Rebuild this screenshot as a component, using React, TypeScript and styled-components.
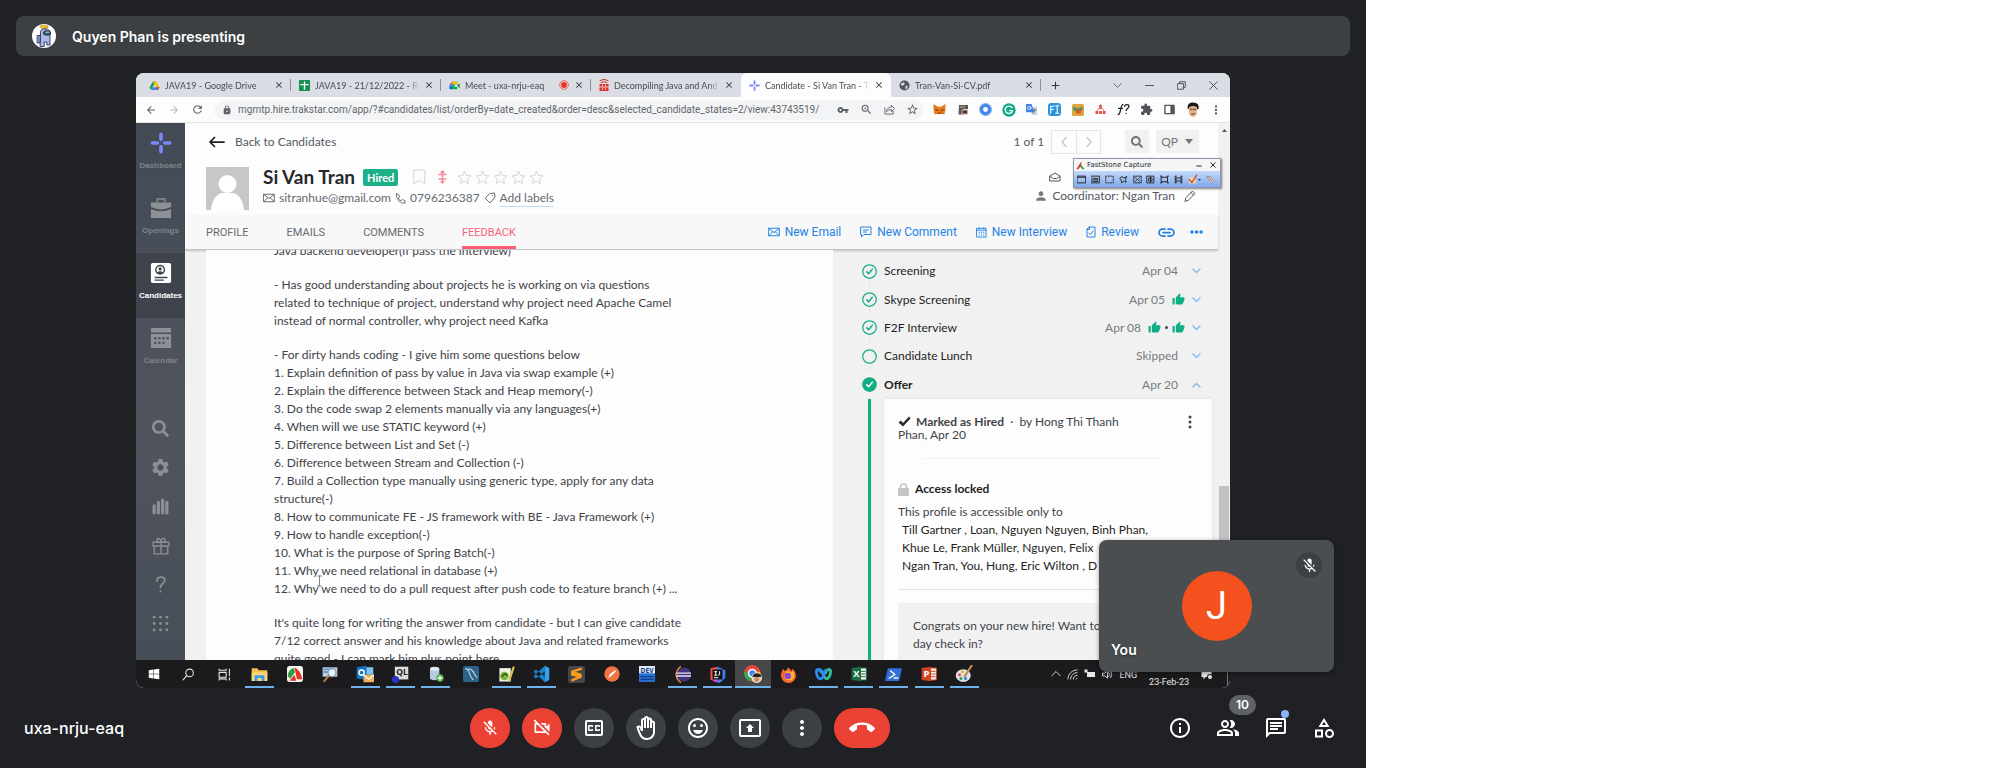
import React from "react";
import styled, { createGlobalStyle, css } from "styled-components";
import {
  MdMicOff, MdOutlineVideocamOff, MdOutlineClosedCaption, MdOutlineBackHand, MdOutlineEmojiEmotions,
  MdOutlinePresentToAll, MdMoreVert, MdCallEnd, MdOutlineInfo, MdOutlinePeopleAlt, MdOutlineChat,
  MdOutlineCategory, MdArrowBack, MdArrowForward, MdRefresh, MdLock, MdVpnKey, MdZoomIn, MdStarBorder,
  MdExtension, MdClose, MdAdd, MdPerson, MdThumbUp, MdSettings,
} from "react-icons/md";
import { FaWindows, FaSearch } from "react-icons/fa";

const Global = createGlobalStyle`
  *, *::before, *::after { box-sizing: border-box; }
  body { margin: 0; background: #fff; }
  button { font: inherit; color: inherit; background: none; border: 0; padding: 0; margin: 0; cursor: pointer; }
  a { color: inherit; text-decoration: none; }
  svg { display: block; flex: none; }
  h1, h2, p, ul, ol { margin: 0; padding: 0; }
  ul, ol { list-style: none; }
`;

const meetFont = `Inter, "Open Sans", sans-serif`;
const appFont = `Lato, "Open Sans", sans-serif`;
const navFont = `Roboto, Lato, sans-serif`;
const systemFont = `Roboto, "Noto Sans", sans-serif`;

/* ---------- meeting frame ---------- */
const Page = styled.div`
  display: grid;
  grid-template-columns: 1366fr 630fr;
  min-height: 100vh;
`;
const Meeting = styled.main`
  position: relative;
  display: flex;
  flex-direction: column;
  min-width: 0;
  height: 100vh;
  min-height: 640px;
  background: #202124;
  color: #fff;
  font-family: ${meetFont};
  overflow: hidden;
`;
const PresenterBar = styled.header`
  display: flex;
  align-items: center;
  gap: 16px;
  flex: none;
  height: 40px;
  margin: 16px 16px 17px;
  padding: 0 16px;
  border-radius: 8px;
  background: #3c4043;
  font-size: 14px;
  font-weight: 600;
`;
const Stage = styled.section`
  display: flex;
  flex: 1;
  min-height: 0;
  padding: 0 136px;
`;
const Screen = styled.div`
  display: flex;
  flex-direction: column;
  flex: 1;
  min-width: 0;
  border-radius: 8px;
  overflow: hidden;
  background: #fff;
`;
const SelfTile = styled.aside`
  position: absolute;
  right: 32px;
  bottom: 96px;
  display: grid;
  place-items: center;
  width: 235px;
  height: 132px;
  border-radius: 8px;
  background: #4a4e51;
  box-shadow: 0 1px 4px rgba(0, 0, 0, 0.4);
`;
const SelfInitial = styled.div`
  display: grid;
  place-items: center;
  width: 70px;
  height: 70px;
  border-radius: 50%;
  background: #f4511e;
  font: 400 38px/1 Roboto, sans-serif;
`;
const SelfMuted = styled.span`
  position: absolute;
  top: 12px;
  right: 12px;
  display: grid;
  place-items: center;
  width: 26px;
  height: 26px;
  border-radius: 50%;
  background: #3c4043;
`;
const SelfName = styled.span`
  position: absolute;
  left: 12px;
  bottom: 12px;
  font-size: 14px;
  font-weight: 600;
  line-height: 20px;
  text-shadow: 0 1px 2px rgba(0, 0, 0, 0.5);
`;
const ControlBar = styled.footer`
  display: grid;
  grid-template-columns: 1fr auto 1fr;
  align-items: center;
  flex: none;
  height: 80px;
  padding: 0 30px 0 24px;
`;
const MeetingCode = styled.span`
  font-size: 16px;
  font-weight: 500;
`;
const Controls = styled.div`
  display: flex;
  gap: 12px;
`;
const RoundButton = styled.button<{ $tone?: "red" | "grey"; $wide?: boolean }>`
  display: grid;
  place-items: center;
  width: ${(p) => (p.$wide ? 56 : 40)}px;
  height: 40px;
  border-radius: 20px;
  background: ${(p) => (p.$tone === "red" ? "#ea4335" : "#3c4043")};
`;
const SideControls = styled.div`
  display: flex;
  justify-content: flex-end;
  gap: 24px;
`;
const SideButton = styled.button`
  position: relative;
`;
const CountBadge = styled.span`
  position: absolute;
  left: 13px;
  bottom: 25px;
  width: 27px;
  border-radius: 10px;
  background: #5f6368;
  font-size: 12px;
  font-weight: 600;
  line-height: 20px;
`;
const NewDot = styled.span`
  position: absolute;
  top: -6px;
  right: -1px;
  width: 8px;
  height: 8px;
  border-radius: 50%;
  background: #8ab4f8;
`;

/* ---------- browser chrome ---------- */
const TabStrip = styled.div`
  display: flex;
  flex: none;
  height: 24px;
  padding-left: 5px;
  background: #dadde3;
  color: #484c52;
  font: 9px/23px ${appFont};
`;
const BrowserTab = styled.button<{ $active?: boolean; $divider?: boolean }>`
  display: flex;
  align-items: center;
  gap: 5px;
  flex: 0 1 150px;
  min-width: 0;
  height: 24px;
  padding: 0 7px 0 8px;
  text-align: left;
  border-radius: 6px 6px 0 0;
  ${(p) => p.$active && css`background: #fdfdfe;`}
  ${(p) => p.$divider && css`background: linear-gradient(#8c9096, #8c9096) right center / 1px 12px no-repeat;`}
`;
const TabTitle = styled.span`
  flex: 1;
  min-width: 0;
  overflow: hidden;
  white-space: nowrap;
  mask-image: linear-gradient(to right, #000 90%, transparent);
`;
const NewTab = styled.button`
  padding: 0 8px;
`;
const WindowButtons = styled.div`
  display: flex;
  align-items: center;
  gap: 23px;
  margin-left: auto;
  padding-right: 12px;
`;
const AddressRow = styled.div`
  display: flex;
  align-items: center;
  flex: none;
  height: 26px;
  padding: 0 3px 0 9px;
  border-bottom: 1px solid #e2e3e5;
  background: #fdfdfe;
  color: #5f6368;
`;
const HistoryButtons = styled.div`
  display: flex;
  gap: 11px;
  margin-right: 10px;
`;
const AddressField = styled.label`
  display: flex;
  align-items: center;
  gap: 6px;
  flex: 1;
  min-width: 0;
  height: 20px;
  margin-right: 5px;
  padding: 0 4px 0 8px;
  border-radius: 10px;
  background: #f3f4f5;
`;
const AddressInput = styled.input`
  flex: 1;
  min-width: 0;
  padding: 0;
  border: 0;
  outline: 0;
  background: none;
  color: #62666b;
  font: 10px/16px ${systemFont};
`;
const FieldIcons = styled.span`
  display: flex;
  align-items: center;
  gap: 11px;
`;
const Extensions = styled.div`
  display: grid;
  grid-template-columns: repeat(13, 23px);
  place-items: center;
`;

/* ---------- recruiting app ---------- */
const AppBody = styled.div`
  display: flex;
  flex: 1;
  min-height: 0;
  color: #3f4347;
  font: 12px/18px ${appFont};
`;
const Sidebar = styled.nav`
  display: flex;
  flex-direction: column;
  flex: 0 0 49px;
  background: linear-gradient(#434a56, #50545d 55%, #474e58);
  color: #8c9095;
`;
const SideLink = styled.a<{ $active?: boolean }>`
  display: flex;
  flex-direction: column;
  align-items: center;
  gap: 7px;
  height: 65px;
  padding-top: 9px;
  font: 700 8px/10px "Liberation Sans", sans-serif;
  color: ${(p) => (p.$active ? "#fff" : "#7f848a")};
  ${(p) => p.$active && css`background: #3e434c;`}
`;
const SideTools = styled.div`
  display: flex;
  flex-direction: column;
  padding-top: 26px;
`;
const SideTool = styled.button`
  display: grid;
  place-items: center;
  height: 39px;
`;
const Workspace = styled.div`
  display: flex;
  flex-direction: column;
  flex: 1;
  min-width: 0;
  background: #f1f1f2;
`;
const ProfileHead = styled.header`
  display: flex;
  flex-direction: column;
  flex: none;
  height: 92px;
  padding: 6px 0 0 21px;
  background: #fdfdfe;
`;
const HeadRow = styled.div`
  display: flex;
  align-items: center;
  height: 25px;
  color: #55595e;
  padding-right: 19px;
`;
const BackLink = styled.a`
  display: flex;
  align-items: center;
  gap: 10px;
  margin-right: auto;
  padding-left: 3px;
`;
const Pager = styled.div`
  display: flex;
  margin: 0 24px 0 7px;
  border: 1px solid #e6e6e8;
`;
const PagerButton = styled.button`
  display: grid;
  place-items: center;
  width: 24px;
  height: 22px;
  color: #c8cacd;
  & + & { border-left: 1px solid #e6e6e8; }
`;
const GreyButton = styled.button`
  display: flex;
  align-items: center;
  justify-content: center;
  gap: 7px;
  min-width: 24px;
  height: 23px;
  margin-right: 7px;
  padding: 0 6px 0 5px;
  background: #f1f1f2;
  color: #6f757b;
  &:last-child { margin-right: 0; }
`;
const PersonRow = styled.div`
  display: flex;
  gap: 14px;
  margin-top: 13px;
  padding-right: 22px;
`;
const PersonText = styled.div`
  display: flex;
  flex-direction: column;
  flex: 1;
`;
const NameLine = styled.div`
  display: flex;
  align-items: center;
  height: 20px;
  color: #d0d2d4;
`;
const Name = styled.h1`
  margin-right: 8px;
  color: #26282b;
  font-size: 19px;
  line-height: 20px;
`;
const HiredTag = styled.span`
  margin-right: 15px;
  padding: 0 4px;
  border-radius: 2px;
  background: #1bb088;
  color: #fff;
  font-size: 11px;
  font-weight: 700;
  line-height: 17px;
`;
const PriorityMark = styled.span`
  margin: 0 10px 0 12px;
`;
const Stars = styled.span`
  display: flex;
  gap: 3px;
`;
const ContactLine = styled.div`
  display: flex;
  align-items: center;
  gap: 4px;
  height: 22px;
  color: #666a6f;
  white-space: nowrap;
`;
const LabelButton = styled.button`
  border-bottom: 1px solid #bcdcf5;
  line-height: 16px;
`;
const Coordinator = styled.div`
  display: flex;
  flex-direction: column;
  color: #55595e;
`;
const CoordinatorLine = styled.div`
  display: flex;
  align-items: center;
  gap: 4px;
  height: 19px;
  padding-left: 15px;
  &:last-child { padding-left: 0; }
`;
const EditButton = styled.button`
  padding-left: 5px;
`;
const ProfileNav = styled.nav`
  position: relative;
  display: flex;
  align-items: stretch;
  flex: none;
  height: 35px;
  padding: 0 15px 0 21px;
  border-bottom: 1px solid #c4c5c7;
  background: #f8f8f9;
  box-shadow: 0 1px 2px rgba(0, 0, 0, 0.2);
  font-family: ${navFont};
  line-height: 36px;
  white-space: nowrap;
`;
const NavTabs = styled.div`
  display: flex;
  gap: 38px;
  margin-right: auto;
  color: #666a6f;
  font-size: 11px;
`;
const NavTab = styled.a<{ $active?: boolean }>`
  ${(p) => p.$active && css`
    color: #f7637a;
    box-shadow: inset 0 -3px #fb5f72;
  `}
`;
const NavActions = styled.div`
  display: flex;
  gap: 19px;
  color: #2482e4;
`;
const NavAction = styled.button`
  display: flex;
  align-items: center;
  gap: 5px;
  &:last-child { margin-left: -4px; }
`;
const Columns = styled.div`
  display: flex;
  flex: 1;
  min-height: 0;
  overflow: hidden;
`;
const Feedback = styled.article`
  position: relative;
  flex: 0 1 627px;
  height: 100%;
  margin-left: 21px;
  padding-left: 68px;
  background: #fdfdfe;
  overflow: hidden;
  white-space: nowrap;
`;
const Notes = styled.div`
  display: flex;
  flex-direction: column;
  gap: 16px;
  margin-top: -8px;
`;
const Caret = styled.span`
  position: absolute;
  left: 110px;
  top: 325px;
  color: #777;
`;
const Progress = styled.section`
  display: flex;
  flex-direction: column;
  flex: 1;
  min-width: 0;
  padding: 7px 6px 0 29px;
`;
const StageList = styled.ol`
  display: grid;
  grid-template-rows: repeat(5, 1fr);
  flex: none;
  height: 142px;
  color: #1d1f21;
`;
const StageItem = styled.li<{ $bold?: boolean; $last?: boolean }>`
  display: flex;
  align-items: center;
  gap: 7px;
  font-weight: ${(p) => (p.$bold ? 700 : 400)};
  background: ${(p) => (p.$last ? "none" : "linear-gradient(#d3e8e3, #d3e8e3) 7px 24px / 1px 100% no-repeat")};
`;
const StageMeta = styled.span`
  display: flex;
  align-items: center;
  gap: 7px;
  margin-left: auto;
  padding-right: 11px;
  color: #777b80;
  font-weight: 400;
`;
const Thumbs = styled.span`
  display: flex;
  align-items: center;
  gap: 4px;
  color: #0fae85;
`;
const Dot = styled.i`
  width: 3px;
  height: 3px;
  border-radius: 50%;
  background: #444;
`;
const StageDetail = styled.div`
  display: flex;
  flex: 1;
  min-height: 0;
  margin-left: 6px;
  border-left: 3px solid #0fae85;
  padding-left: 13px;
`;
const Card = styled.div`
  flex: 1;
  min-width: 0;
  overflow: hidden;
  padding: 16px 14px 0;
  background: #fdfdfe;
  box-shadow: 0 0 3px rgba(0, 0, 0, 0.08);
  white-space: nowrap;
`;
const Marked = styled.div`
  display: flex;
  justify-content: space-between;
  align-items: flex-start;
  line-height: 13px;
  padding-right: 6px;
  p svg { display: inline-block; margin-right: 5px; vertical-align: -1px; }
`;
const Rule = styled.hr<{ $faint?: boolean }>`
  margin: ${(p) => (p.$faint ? "17px 38px 21px 24px" : "14px 0 13px")};
  border: 0;
  border-top: 1px solid ${(p) => (p.$faint ? "#f3f3f4" : "#e3e3e5")};
`;
const LockedTitle = styled.h2`
  display: flex;
  align-items: center;
  gap: 6px;
  margin-bottom: 5px;
  color: #1d1f21;
  font-size: 12px;
  line-height: 18px;
`;
const Members = styled.p`
  padding-left: 4px;
  color: #1d1f21;
`;
const HireNote = styled.div`
  padding: 14px 15px;
  background: #f1f1f2;
  height: 80px;
`;
const ScrollTrack = styled.div`
  display: flex;
  flex-direction: column;
  align-items: center;
  flex: 0 0 12px;
  padding-top: 6px;
  background: #f1f1f2;
  color: #55595e;
`;
const ScrollThumb = styled.div`
  flex: 1;
  width: 10px;
  margin-top: 354px;
  background: #c1c1c3;
`;
const CaptureWindow = styled.div`
  position: absolute;
  top: 158px;
  right: 145px;
  width: 148px;
  height: 30px;
  border: 1px solid #8b97a8;
  background: #f4f5f7;
  box-shadow: 1px 1px 2px rgba(0, 0, 0, 0.5);
  color: #2a2a2a;
`;
const CaptureTitle = styled.div`
  display: flex;
  align-items: center;
  gap: 2px;
  height: 12px;
  padding: 0 4px 0 2px;
  font: 7px/12px "DejaVu Sans", sans-serif;
  white-space: nowrap;
`;
const CaptureCaption = styled.span`
  flex: 1;
`;
const CaptureTools = styled.div`
  display: flex;
  align-items: center;
  justify-content: space-between;
  height: 16px;
  padding: 0 5px 0 3px;
  background: linear-gradient(#c5daf8, #7fa9ee);
`;

/* ---------- desktop taskbar ---------- */
const Taskbar = styled.div`
  display: flex;
  flex: none;
  height: 28px;
  background: #1b1b1d;
  color: #e8e8e8;
  font: 9px/12px ${systemFont};
`;
const TaskIcons = styled.div`
  display: grid;
  grid-template-columns: repeat(24, 1fr);
  flex: 0 1 846px;
`;
const TaskButton = styled.button<{ $open?: boolean; $front?: boolean }>`
  display: grid;
  place-items: center;
  ${(p) => p.$front && css`background-color: #47474a;`}
  ${(p) => p.$open && css`
    background-image: linear-gradient(#6fb2ea, #6fb2ea);
    background-position: center bottom;
    background-size: ${p.$front ? "100%" : "29px"} 2px;
    background-repeat: no-repeat;
  `}
`;
const Tray = styled.div`
  display: flex;
  gap: 6px;
  margin-left: auto;
  padding: 9px 2px 0 0;
`;
const TrayDate = styled.span`
  padding: 7px 6px 0 6px;
`;
const TrayEdge = styled.span`
  width: 1px;
  margin-left: 8px;
  background: #77777a;
`;

/* ---------- drawings ---------- */
type GlyphProps = { w?: number; h?: number; box?: string; children: React.ReactNode; line?: number };
const Glyph = ({ w = 12, h = w, box = "0 0 24 24", children, line }: GlyphProps) => (
  <svg width={w} height={h} viewBox={box} aria-hidden="true"
    fill={line ? "none" : "currentColor"} stroke={line ? "currentColor" : "none"}
    strokeWidth={line} strokeLinecap="round" strokeLinejoin="round">{children}</svg>
);

const Crewmate = () => (
  <Glyph w={24}>
    <circle cx="12" cy="12" r="12" fill="#fff" />
    <ellipse cx="12" cy="2.8" rx="4.2" ry="1.5" fill="#f4c92c" stroke="#b58a14" strokeWidth=".7" />
    <path d="M5.5 11.5h3V19h-3z" fill="#7f93c9" stroke="#1f2540" strokeWidth=".8" />
    <path d="M8.5 8.5C8.5 5.8 10 4.8 13 4.8s5 1.400 5 3.700V21h-3.200v-3h-2.600v4.500H8.500z" fill="#a9b8e4" stroke="#2a3158" strokeWidth=".9" />
    <rect x="11.500" y="7" width="7" height="4" rx="2" fill="#2e5f66" stroke="#10222a" strokeWidth=".9" />
    <path d="M14 8.200h3" stroke="#b9e6ea" strokeWidth="1" />
  </Glyph>
);
const Drive = () => (
  <Glyph w={11}>
    <path d="M8.500 3h7L12 9z" fill="#188038" /><path d="M8.500 3 1 16l3.500 6L12 9z" fill="#1e9e54" />
    <path d="M15.500 3 23 16h-7L8.500 3z" fill="#fbbc04" /><path d="M8 16h15l-3.500 6h-15z" fill="#4285f4" /><path d="M16 16h7l-3.500 6z" fill="#ea4335" />
  </Glyph>
);
const Sheet = () => (
  <Glyph w={11}><rect width="24" height="24" rx="2" fill="#14904f" /><path d="M12 4v16M4 10h16" stroke="#fff" strokeWidth="3" /></Glyph>
);
const MeetLogo = () => (
  <Glyph w={11}>
    <path d="M7 4h11v5h-6v6h6v5H7z" fill="#00ac47" /><path d="M1 10l6-6v6z" fill="#ea4335" /><path d="M1 10h6v5H1z" fill="#2684fc" />
    <path d="M1 15h6v5H3a2 2 0 0 1-2-2z" fill="#0066da" /><path d="M7 4h9a2 2 0 0 1 2 2v3H7z" fill="#ffba00" /><path d="M18 12l5-5v11z" fill="#00832d" />
  </Glyph>
);
const Javap = () => (
  <Glyph w={10} h={12} box="0 0 20 24"><path d="M2 3q8-5 16 0M4 7q6-4 12 0" stroke="#d8332d" strokeWidth="2" fill="none" /><rect x="1" y="10" width="18" height="14" rx="1" fill="#d8332d" /><path d="M1 16h18M7 12v2M13 12v2M7 19v2M13 19v2" stroke="#fff" strokeWidth="1.500" /></Glyph>
);
const Spark = ({ size = 11 }: { size?: number }) => (
  <Glyph w={size}><path d="M12 2.500V8M12 16v5.500M2.500 12H8M16 12h5.500" stroke="#7b86f8" strokeWidth="4" strokeLinecap="round" /></Glyph>
);
const Globe = () => (
  <Glyph w={11}><circle cx="12" cy="12" r="11" fill="#50555b" /><path d="M4 8l6-3 3 3-4 4H5zM14 13l5-1-1 6-4 2z" fill="#dadde3" /></Glyph>
);
const Recording = () => (
  <Glyph w={10}><circle cx="12" cy="12" r="10.500" fill="none" stroke="#ef5545" strokeWidth="2" /><circle cx="12" cy="12" r="7" fill="#e5382b" /></Glyph>
);
const Envelope = ({ w = 12 }: { w?: number }) => (
  <Glyph w={w} h={10} box="0 0 24 20" line={2}><path d="M1.500 2.500h21v15h-21zM1.500 3l10.500 8 10.500-8M2 17l7-7M22 17l-7-7" /></Glyph>
);
const Chevron = ({ up }: { up?: boolean }) => (
  <Glyph w={9} h={6} box="0 0 18 12" line={3}><path d={up ? "M2 10l7-7 7 7" : "M2 2l7 7 7-7"} stroke="#85bdec" /></Glyph>
);
const StageMark = ({ state }: { state: "done" | "open" | "now" }) => (
  <Glyph w={15} line={2}>
    <circle cx="12" cy="12" r="10.800" stroke="#19ad87" fill={state === "now" ? "#0fae85" : "#f1f1f2"} />
    {state !== "open" && <path d="M7.500 12.500l3 3 6-7" stroke={state === "now" ? "#fff" : "#19ad87"} strokeWidth="2.500" />}
  </Glyph>
);
const star = "M12 2l3 6.800 7.200.7-5.400 4.900 1.600 7.100L12 17.700l-6.400 3.800 1.600-7.100L1.800 9.500 9 8.800z";

const extensionIcons = [
  <Glyph w={13}><path d="M1 2l8 5h6l8-5v10l-2 9-6-1h-6l-6 1-2-9z" fill="#e8791e" /><path d="M5 12l4 2M19 12l-4 2M9 19h6" stroke="#7b3d12" strokeWidth="2" /></Glyph>,
  <Glyph w={12}><path d="M4 2h18v8H12v11H3z" fill="#55585c" /><path d="M6 6h10M11 12h10v8H11z" stroke="#d9a58e" strokeWidth="2" fill="#3b3d40" /></Glyph>,
  <Glyph w={13}><circle cx="12" cy="12" r="11" fill="#4387e8" /><circle cx="12" cy="12" r="4.500" fill="#fff" /><circle cx="12" cy="12" r="11" fill="none" stroke="#7eb0f5" strokeWidth="2" /></Glyph>,
  <Glyph w={14}><circle cx="12" cy="12" r="11.500" fill="#14a88a" /><path d="M17 8a6.300 6.300 0 1 0 1 5h-5" stroke="#fff" strokeWidth="2.400" fill="none" /></Glyph>,
  <Glyph w={13}><path d="M9 7h13v15H13z" fill="#c9d2dd" /><path d="M2 2h10l5 15H2z" fill="#3f7fe8" /><circle cx="8" cy="9" r="3" stroke="#fff" strokeWidth="1.500" fill="none" /><path d="M15 13h6M18 11q0 6-3 8" stroke="#5f6b7a" strokeWidth="1.500" fill="none" /></Glyph>,
  <Glyph w={13}><rect width="24" height="24" rx="6" fill="#2a93dc" /><path d="M5 19V6h6M5 12h5M14 5h6M17 5v14M14 19h6" stroke="#fff" strokeWidth="2" fill="none" /></Glyph>,
  <Glyph w={12}><rect width="24" height="24" rx="3" fill="#e0a63c" /><path d="M3 5l9 4 9-4v8l-9 3-9-3z" fill="#3f9b76" /><path d="M8 10h10v9H8z" fill="#cf5b34" /></Glyph>,
  <Glyph w={11}><path d="M12 2v8M5 14l3-4h8l3 4" stroke="#e05343" strokeWidth="2" fill="none" /><path d="M9 2h6v6H9zM1 15h6v7H1zM9 15h6v7H9zM17 15h6v7h-6z" fill="#e05343" /></Glyph>,
  <Glyph w={13} line={2.4}><path d="M2 21c5 2 4-18 9-18M3 10h7M14 6c1-4 8-4 8 0 0 4-5 4-5 8M16.500 19v.3" stroke="#222" /></Glyph>,
  <MdExtension size={13} color="#505459" />,
  <Glyph w={11}><path d="M2 3h20v18H2z" fill="none" stroke="#505459" strokeWidth="3" /><path d="M14 3h8v18h-8z" fill="#505459" /></Glyph>,
  <Glyph w={16}><path d="M4 10C3 3 8 0 13 1c6 0 9 4 7 10z" fill="#1c1716" /><path d="M6 8q6-4 12 0v8q-1 6-6 6t-6-6z" fill="#e3ae88" /><path d="M8 11h3M13 11h3M10 18h4" stroke="#2b1a12" strokeWidth="1.200" /></Glyph>,
  <MdMoreVert size={14} />,
];

const Letter = ({ bg, children }: { bg: string; children: string }) => (
  <Glyph w={16}><path d="M12 3h11v18H12z" fill="#f2f2f2" stroke={bg} strokeWidth="1.500" /><path d="M15 8h6M15 12h6M15 16h6" stroke={bg} strokeWidth="1.500" /><path d="M1 3l14-2v22L1 21z" fill={bg} /><text x="8" y="17" fontSize="14" fontWeight="700" fill="#fff" textAnchor="middle" fontFamily="Open Sans">{children}</text></Glyph>
);
type Task = { name: string; icon: React.ReactNode; open?: boolean; front?: boolean };
const tasks: Task[] = [
  { name: "Start", icon: <FaWindows size={12} color="#fff" /> },
  { name: "Search", icon: <Glyph w={13} line={2}><circle cx="14" cy="9" r="7" /><path d="M9 14l-7 8" /></Glyph> },
  { name: "Task view", icon: <Glyph w={13} line={2}><path d="M2 8h13v9H2zM2 2v2h13V2M2 22v-2h13v2M21 2v12M21 18v4" /></Glyph> },
  { name: "File Explorer", open: true, icon: <Glyph w={17}><path d="M1 3h8l2 3h12v15H1z" fill="#f3c24b" /><path d="M1 9h22v12H1z" fill="#fbd977" /><path d="M5 13h14v8h-4v-4H9v4H5z" fill="#3f9be8" /></Glyph> },
  { name: "FastStone Capture", icon: <Glyph w={16}><rect width="24" height="24" rx="4" fill="#f4f4f0" /><path d="M1 15Q2 5 10 3l2 6-7 10z" fill="#2f9b45" /><path d="M11 2q9 4 12 18h-8z" fill="#e33528" /><path d="M4 22l7-9 3 9z" fill="#e33528" /></Glyph> },
  { name: "Everything", icon: <Glyph w={16}><rect x="1" y="2" width="22" height="14" fill="#b8d4ea" /><path d="M3 5h12M3 9h8" stroke="#4d88bd" strokeWidth="2" /><circle cx="15" cy="10" r="6" fill="#e4f2fb" stroke="#8798a8" strokeWidth="2" /><path d="M10 15l-7 8" stroke="#b57b4a" strokeWidth="3" /></Glyph> },
  { name: "Outlook", open: true, icon: <Glyph w={18}><path d="M13 3h10v10H13z" fill="#7cc4f4" /><path d="M1 3l13-2v19L1 18z" fill="#1472c4" /><circle cx="7.500" cy="10" r="3.500" fill="none" stroke="#fff" strokeWidth="2" /><path d="M10 13h14v10H10z" fill="#f0b35a" /><path d="M10 13l7 6 7-6" stroke="#fff" strokeWidth="1.500" fill="none" /></Glyph> },
  { name: "SQL Developer", open: true, icon: <Glyph w={17}><path d="M4 1h19v18H4z" fill="#dcdcda" /><text x="14" y="12" fontSize="12" fontWeight="700" fill="#1b1b1d" textAnchor="middle" fontFamily="Open Sans">QL</text><circle cx="5" cy="19" r="5" fill="#2a36c8" /></Glyph> },
  { name: "Database", open: true, icon: <Glyph w={16}><path d="M3 4v15q7 5 14 0V4z" fill="#b9cbe0" /><ellipse cx="10" cy="4" rx="7" ry="3" fill="#dfe9f4" /><circle cx="18" cy="18" r="5.500" fill="#4bae3f" /><path d="M18 15v6M15 18h6" stroke="#fff" strokeWidth="2" /></Glyph> },
  { name: "MySQL Workbench", icon: <Glyph w={16}><rect width="24" height="24" rx="3" fill="#2b6488" /><path d="M4 4c6 0 6 14 11 16M8 5c8-2 8 9 13 12" stroke="#b8d6e6" strokeWidth="1.800" fill="none" /></Glyph> },
  { name: "Notepad++", open: true, icon: <Glyph w={17}><path d="M2 3h16v19H2z" fill="#eef3e4" /><circle cx="9" cy="14" r="6" fill="#79b843" /><path d="M6 15q3-6 7-2" stroke="#2f4d19" strokeWidth="2" fill="none" /><path d="M22 2l-6 18" stroke="#e2c04b" strokeWidth="3" /></Glyph> },
  { name: "VS Code", open: true, icon: <Glyph w={18}><path d="M17 1l6 3v16l-6 3z" fill="#36a5ee" /><path d="M17 1L2 15l3 3L18 8zM17 23L2 9l3-3 13 10z" fill="#1a80c9" /></Glyph> },
  { name: "Sublime Text", icon: <Glyph w={17}><rect width="24" height="24" rx="3" fill="#47474a" /><path d="M18 4L6 8v4l12 3-12 5M6 8.500l12 4" stroke="#f79a1f" strokeWidth="3.500" fill="none" /></Glyph> },
  { name: "Postman", icon: <Glyph w={16}><circle cx="12" cy="12" r="11.500" fill="#f37440" /><path d="M6 18l3-6 8-6 1 2-7 7z" fill="#fff" /></Glyph> },
  { name: "Dev tools", icon: <Glyph w={16}><path d="M0 0h24v24H0z" fill="#246fd0" /><path d="M0 0h24v11H0z" fill="#dce9fa" /><text x="12" y="10" fontSize="10" fontWeight="700" fill="#173e79" textAnchor="middle" fontFamily="Open Sans">DEV</text><path d="M3 16h8M13 16h8M3 20h18" stroke="#123f86" strokeWidth="2" /></Glyph> },
  { name: "Eclipse", open: true, icon: <Glyph w={17}><path d="M9 1Q-3 12 9 23" stroke="#f0943a" strokeWidth="2" fill="none" /><circle cx="14" cy="12" r="10" fill="#42377c" /><path d="M4 10h20M4 14h20" stroke="#e6e3f4" strokeWidth="2" /></Glyph> },
  { name: "IntelliJ IDEA", open: true, icon: <Glyph w={17}><path d="M2 3l10-2-3 21-7-3z" fill="#f4513f" /><path d="M12 1l11 5v11l-8 7-8-2z" fill="#3b7ff0" /><path d="M8 23l-4-5 12 2z" fill="#c94bd8" /><path d="M5 5h14v14H5z" fill="#111" /><path d="M8 8h3M9.500 8v5M8 13h3M15 8v4q0 1-2 1M7.500 16.500h5" stroke="#fff" strokeWidth="1.400" fill="none" /></Glyph> },
  { name: "Chrome", open: true, front: true, icon: <Glyph w={18}><circle cx="11" cy="11" r="11" fill="#e8453c" /><path d="M1 7q-3 10 7 15l5-8-8-2z" fill="#34a853" /><path d="M11 22q11-1 11-13h-9l2 6z" fill="#fbc116" /><circle cx="11" cy="11" r="5" fill="#4285f4" stroke="#fff" strokeWidth="2" /><circle cx="17" cy="17" r="7" fill="#e9d9c8" /><path d="M11 16q2-6 7-5 5 1 5 5z" fill="#222" /><circle cx="17" cy="19" r="3.500" fill="#c98f68" /></Glyph> },
  { name: "Firefox", icon: <Glyph w={17}><path d="M2 9l2-5 3 3q3-1 4-5 4 2 5 5l2-3q6 6 4 13-3 7-10 7T2 17q-2-4 0-8z" fill="#f4652b" /><path d="M8 8q4-2 7 1l4-2q4 9-3 13-8 2-10-5z" fill="#fdb62c" /><circle cx="11" cy="14" r="4.500" fill="#8b45d6" /></Glyph> },
  { name: "Webex", open: true, icon: <Glyph w={17}><path d="M7 7c4-3 5 11 9 11s6-6 6-11c-1-4-6-2-7 3" stroke="#32c191" strokeWidth="4" fill="none" /><path d="M9 9C8 3 2 4 2 8c1 12 8 13 10 5q1-5 3-7" stroke="#2b8df2" strokeWidth="4" fill="none" /></Glyph> },
  { name: "Excel", open: true, icon: <Letter bg="#1d7044">X</Letter> },
  { name: "PowerShell", open: true, icon: <Glyph w={17}><path d="M4 3h20l-4 18H0z" fill="#2f6fd6" /><path d="M8 7l6 5-8 5M13 17h5" stroke="#fff" strokeWidth="2" fill="none" /></Glyph> },
  { name: "PowerPoint", open: true, icon: <Letter bg="#d24625">P</Letter> },
  { name: "Paint", open: true, icon: <Glyph w={18}><ellipse cx="11" cy="14" rx="10" ry="8.500" fill="#d8e3ea" /><circle cx="6" cy="13" r="2" fill="#e24b3a" /><circle cx="10" cy="9" r="2" fill="#f0b429" /><circle cx="8" cy="18" r="2" fill="#3a9b52" /><circle cx="14" cy="18" r="2" fill="#357fd0" /><path d="M22 1l-9 14" stroke="#c98746" strokeWidth="3" /></Glyph> },
];

const tabs = [
  { title: "JAVA19 - Google Drive", icon: <Drive />, divider: true },
  { title: "JAVA19 - 21/12/2022 - Rele", icon: <Sheet />, divider: true },
  { title: "Meet - uxa-nrju-eaq", icon: <MeetLogo />, divider: true, recording: true },
  { title: "Decompiling Java and And", icon: <Javap /> },
  { title: "Candidate - Si Van Tran - T", icon: <Spark />, active: true },
  { title: "Tran-Van-Si-CV.pdf", icon: <Globe />, divider: true },
];

const sideLinks = [
  { label: "Dashboard", icon: <Spark size={22} /> },
  { label: "Openings", icon: <Glyph w={22}><path d="M8 5V2h8v3" fill="none" stroke="currentColor" strokeWidth="2" /><path d="M1 6h22v5q-11 5-22 0zM1 13q11 5 22 0v10H1z" fill="#8c9196" /></Glyph> },
  { label: "Candidates", active: true, icon: <Glyph w={22}><rect x="1" y="1" width="22" height="22" rx="2" fill="#fff" /><circle cx="11" cy="8.500" r="4.700" fill="none" stroke="#3e434c" strokeWidth="1.600" /><circle cx="11" cy="7.500" r="1.800" fill="#3e434c" /><path d="M7.500 11.500q3.500-3 7 0l-3.500 2zM5 16h14v1.600H5zM5 19h10v1.500H5z" fill="#3e434c" /></Glyph> },
  { label: "Calendar", icon: <Glyph w={22}><path d="M1 2q0-1 1-1h20q1 0 1 1v4H1zM1 7.500h22V22q0 1-1 1H2q-1 0-1-1z" fill="#8c9196" /><path d="M9 11h2.500v2.500H9zM13.500 11H16v2.500h-2.500zM18 11h2.500v2.500H18zM4.500 16H7v2.500H4.500zM9 16h2.500v2.500H9zM4.500 11H7v2.500H4.500zM13.500 16H16v2.500h-2.500z" fill="#50555e" /></Glyph> },
];
const sideTools = [
  { label: "Search", icon: <FaSearch size={17} /> },
  { label: "Settings", icon: <MdSettings size={21} /> },
  { label: "Reports", icon: <Glyph w={17}><path d="M3 11v10M9 6v15M15 3v18M21 6v15" stroke="currentColor" strokeWidth="4.500" strokeLinecap="round" /></Glyph> },
  { label: "Gifts", icon: <Glyph w={18} line={1.800}><path d="M1.500 7h21v5h-21zM3 12v10.500h18V12M12 7v15M12 7C8 7 5 5 7 2.500S12 4 12 7c0-3 3-7 5-4.500S16 7 12 7" /></Glyph> },
  { label: "Help", icon: <Glyph w={17} line={2.600}><path d="M7 7c0-7 11-7 11-1 0 5-6 4-6 10M12 21.500v.5" /></Glyph> },
  { label: "Apps", icon: <Glyph w={17}>{[3, 12, 21].map((y) => [3, 12, 21].map((x) => <circle key={`${x}-${y}`} cx={x} cy={y} r="2" />))}</Glyph> },
];

const notes = [
  ["Java backend developer(if pass the interview)"],
  [
    "- Has good understanding about projects he is working on via questions",
    "related to technique of project, understand why project need Apache Camel",
    "instead of normal controller, why project need Kafka",
  ],
  [
    "- For dirty hands coding - I give him some questions below",
    "1. Explain definition of pass by value in Java via swap example (+)",
    "2. Explain the difference between Stack and Heap memory(-)",
    "3. Do the code swap 2 elements manually via any languages(+)",
    "4. When will we use STATIC keyword (+)",
    "5. Difference between List and Set (-)",
    "6. Difference between Stream and Collection (-)",
    "7. Build a Collection type manually using generic type, apply for any data",
    "structure(-)",
    "8. How to communicate FE - JS framework with BE - Java Framework (+)",
    "9. How to handle exception(-)",
    "10. What is the purpose of Spring Batch(-)",
    "11. Why we need relational in database (+)",
    "12. Why we need to do a pull request after push code to feature branch (+) ...",
  ],
  [
    "It's quite long for writing the answer from candidate - but I can give candidate",
    "7/12 correct answer and his knowledge about Java and related frameworks",
    "quite good - I can mark him plus point here",
  ],
];

const thumb = <MdThumbUp size={13} />;
const stages: { name: string; meta: string; state: "done" | "open" | "now"; thumbs?: number }[] = [
  { name: "Screening", meta: "Apr 04", state: "done" },
  { name: "Skype Screening", meta: "Apr 05", state: "done", thumbs: 1 },
  { name: "F2F Interview", meta: "Apr 08", state: "done", thumbs: 2 },
  { name: "Candidate Lunch", meta: "Skipped", state: "open" },
  { name: "Offer", meta: "Apr 20", state: "now" },
];

const captureIcons = [
  <path d="M1 3h22v18H1zM1 6h22" />, <path d="M1 3h22v18H1zM6 9h12v8H6zM9 13h6" />,
  <path d="M2 3h20v18H2z" strokeDasharray="3 4" />, <path d="M3 8l5-4 5 4 8-4-4 8 2 7-7-2-5 4-1-7z" />,
  <path d="M2 3h20v18H2zM6 7l12 10M18 7L6 17" strokeDasharray="4 3" />, <path d="M3 3h18v18H3zM8 8h8v8H8zM12 5v14" />,
  <path d="M4 6h16v12H4zM1 3h4v4M23 3h-4v4M1 21h4v-4M23 21h-4v-4" />, <path d="M5 2v20M19 2v20M5 8h14M5 16h14M2 5h3M2 12h3M2 19h3M19 5h3M19 12h3M19 19h3" />,
];

/* ---------- sections ---------- */
const Browser = () => (
  <>
    <TabStrip role="tablist">
      {tabs.map((t) => (
        <BrowserTab key={t.title} role="tab" aria-selected={!!t.active} $active={t.active} $divider={t.divider}>
          {t.icon}<TabTitle>{t.title}</TabTitle>{t.recording && <Recording />}<MdClose size={10} color="#33363a" />
        </BrowserTab>
      ))}
      <NewTab aria-label="New tab"><MdAdd size={13} color="#33363a" /></NewTab>
      <WindowButtons>
        <button aria-label="Search tabs"><Glyph w={9} line={2}><path d="M2 7l10 10L22 7" /></Glyph></button>
        <button aria-label="Minimize"><Glyph w={9} line={2.500}><path d="M1 12h22" /></Glyph></button>
        <button aria-label="Restore"><Glyph w={9} line={2.500}><path d="M2 7h15v15H2zM7 7V2h15v15h-5" /></Glyph></button>
        <button aria-label="Close"><Glyph w={9} line={2.500}><path d="M2 2l20 20M22 2L2 22" /></Glyph></button>
      </WindowButtons>
    </TabStrip>
    <AddressRow>
      <HistoryButtons>
        <button aria-label="Back"><MdArrowBack size={12} /></button>
        <button aria-label="Forward"><MdArrowForward size={12} color="#b4b7bb" /></button>
        <button aria-label="Reload"><MdRefresh size={13} /></button>
      </HistoryButtons>
      <AddressField>
        <MdLock size={10} />
        <AddressInput aria-label="Address" defaultValue="mgmtp.hire.trakstar.com/app/?#candidates/list/orderBy=date_created&order=desc&selected_candidate_states=2/view:43743519/" />
        <FieldIcons>
          <MdVpnKey size={12} /><MdZoomIn size={13} />
          <Glyph w={11} line={2}><path d="M2 8v14h18v-6M6 16c0-7 5-9 10-9V3l7 7-7 7v-5c-4 0-7 1-10 4z" /></Glyph>
          <MdStarBorder size={13} />
        </FieldIcons>
      </AddressField>
      <Extensions>{extensionIcons.map((icon, i) => <span key={i}>{icon}</span>)}</Extensions>
    </AddressRow>
  </>
);

const SideMenu = () => (
  <Sidebar aria-label="Main">
    {sideLinks.map((l) => <SideLink key={l.label} href="#" $active={l.active}>{l.icon}{l.label}</SideLink>)}
    <SideTools>{sideTools.map((t) => <SideTool key={t.label} aria-label={t.label}>{t.icon}</SideTool>)}</SideTools>
  </Sidebar>
);

const Head = () => (
  <ProfileHead>
    <HeadRow>
      <BackLink href="#"><Glyph w={16} h={12} box="0 0 32 24" line={3.500}><path d="M30 12H3M11 3l-9 9 9 9" stroke="#1d1f21" /></Glyph>Back to Candidates</BackLink>
      1 of 1
      <Pager>
        <PagerButton aria-label="Previous"><Glyph w={8} h={12} box="0 0 14 24" line={3}><path d="M11 3l-8 9 8 9" /></Glyph></PagerButton>
        <PagerButton aria-label="Next"><Glyph w={8} h={12} box="0 0 14 24" line={3}><path d="M3 3l8 9-8 9" /></Glyph></PagerButton>
      </Pager>
      <GreyButton aria-label="Search"><FaSearch size={12} /></GreyButton>
      <GreyButton>QP<Glyph w={8} h={5} box="0 0 16 10"><path d="M0 0h16L8 10z" /></Glyph></GreyButton>
    </HeadRow>
    <PersonRow>
      <Glyph w={43} box="0 0 43 43"><path d="M0 0h43v43H0z" fill="#c6c7c9" /><circle cx="21.500" cy="17" r="9" fill="#fff" /><path d="M5 43c1-11 6-16 11-17h11c5 1 10 6 11 17z" fill="#fff" /></Glyph>
      <PersonText>
        <NameLine>
          <Name>Si Van Tran</Name><HiredTag>Hired</HiredTag>
          <Glyph w={13} h={16} box="0 0 24 30" line={1.800}><path d="M2 2h20v26l-10-7-10 7z" /></Glyph>
          <PriorityMark><Glyph w={9} h={14} box="0 0 18 28" line={2.800}><path d="M9 2v24M2 9h14M2 18h14M6 5l3-3 3 3M6 23l3 3 3-3" stroke="#f78a9b" /></Glyph></PriorityMark>
          <Stars>{[1, 2, 3, 4, 5].map((n) => <Glyph key={n} w={15} line={1.500}><path d={star} /></Glyph>)}</Stars>
        </NameLine>
        <ContactLine>
          <Envelope />sitranhue@gmail.com
          <Glyph w={11} line={2}><path d="M3 2l5 1 2 6-3 2q2 4 6 6l3-3 6 3v5q-8 2-14-5T3 2z" /></Glyph>0796236387
          <Glyph w={12} line={2}><path d="M12 3l9-1 1 8-10 12-9-9zM17 7v.1" /></Glyph><LabelButton>Add labels</LabelButton>
        </ContactLine>
      </PersonText>
      <Coordinator>
        <CoordinatorLine><Glyph w={12} h={10} box="0 0 24 20" line={2}><path d="M2 8l10-6 10 6v10H2zM2 9l7 4h6l7-4" /></Glyph></CoordinatorLine>
        <CoordinatorLine><MdPerson size={14} color="#74797e" />Coordinator: Ngan Tran<EditButton aria-label="Edit"><Glyph w={12} line={2}><path d="M2 22l2-7L17 2l5 5L9 20zM14 5l5 5" /></Glyph></EditButton></CoordinatorLine>
      </Coordinator>
    </PersonRow>
  </ProfileHead>
);

const SubNav = () => (
  <ProfileNav aria-label="Profile">
    <NavTabs>
      <NavTab href="#">PROFILE</NavTab><NavTab href="#">EMAILS</NavTab><NavTab href="#">COMMENTS</NavTab><NavTab href="#" $active>FEEDBACK</NavTab>
    </NavTabs>
    <NavActions>
      <NavAction><Envelope />New Email</NavAction>
      <NavAction><Glyph w={12} line={2}><path d="M2 2h20v15H8l-5 5v-5H2zM7 8h10M7 12h6" /></Glyph>New Comment</NavAction>
      <NavAction><Glyph w={11} line={2}><path d="M2 3h20v19H2zM2 7h20M7 11v2M12 11v2M17 11v2M7 17v1M12 17v1M17 17v1M7 1v3M17 1v3" /></Glyph>New Interview</NavAction>
      <NavAction><Glyph w={10} h={12} box="0 0 20 24" line={2}><path d="M7 2h11v20H2V7zM7 2v5H2M6 14l3 3 5-7" /></Glyph>Review</NavAction>
      <NavAction aria-label="Copy link"><Glyph w={17} h={9} box="0 0 34 18" line={3.500}><path d="M14 2H9a7 7 0 0 0 0 14h5M20 2h5a7 7 0 0 1 0 14h-5M10 9h14" /></Glyph></NavAction>
      <NavAction aria-label="More"><Glyph w={13} h={4} box="0 0 26 8"><circle cx="4" cy="4" r="3.500" /><circle cx="13" cy="4" r="3.500" /><circle cx="22" cy="4" r="3.500" /></Glyph></NavAction>
    </NavActions>
  </ProfileNav>
);

const Timeline = () => (
  <Progress>
    <StageList>
      {stages.map((s) => (
        <StageItem key={s.name} $bold={s.state === "now"} $last={s.state === "now"}>
          <StageMark state={s.state} />{s.name}
          <StageMeta>
            {s.meta}
            {s.thumbs && <Thumbs>{thumb}{s.thumbs > 1 && <><Dot />{thumb}</>}</Thumbs>}
            {!s.thumbs && <span />}
            <Chevron up={s.state === "now"} />
          </StageMeta>
        </StageItem>
      ))}
    </StageList>
    <StageDetail>
      <Card>
        <Marked>
          <p><Glyph w={13} h={11} box="0 0 26 22"><path d="M1 13l5-4 4 5L22 1l3 4-15 16z" fill="#26282b" /></Glyph><strong>Marked as Hired</strong> &nbsp;·&nbsp; by Hong Thi Thanh<br />Phan, Apr 20</p>
          <button aria-label="More options"><Glyph w={4} h={14} box="0 0 8 28"><circle cx="4" cy="4" r="3" /><circle cx="4" cy="14" r="3" /><circle cx="4" cy="24" r="3" /></Glyph></button>
        </Marked>
        <Rule $faint />
        <LockedTitle><Glyph w={11} h={13} box="0 0 22 26"><path d="M5 11V7q0-5 6-5t6 5v4" fill="none" stroke="#c4c5c7" strokeWidth="3" /><rect y="10" width="22" height="16" rx="2" fill="#c4c5c7" /></Glyph>Access locked</LockedTitle>
        <p>This profile is accessible only to</p>
        <Members>Till Gartner , Loan, Nguyen Nguyen, Binh Phan,<br />Khue Le, Frank Müller, Nguyen, Felix<br />Ngan Tran, You, Hung, Eric Wilton , D</Members>
        <Rule />
        <HireNote>Congrats on your new hire! Want to<br />day check in?</HireNote>
      </Card>
    </StageDetail>
  </Progress>
);

const Desktop = () => (
  <Taskbar>
    <TaskIcons>{tasks.map((t) => <TaskButton key={t.name} aria-label={t.name} $open={t.open} $front={t.front}>{t.icon}</TaskButton>)}</TaskIcons>
    <Tray>
      <Glyph w={10} line={2.200}><path d="M2 16l10-10 10 10" /></Glyph>
      <Glyph w={11} line={2}><path d="M2 22C2 11 11 2 22 2M8 22C8 14 14 8 22 8M14 22c0-5 3-8 8-8M20 22l2-2" /></Glyph>
      <Glyph w={12} h={10} box="0 0 24 20"><path d="M6 6h16v10H6zM1 1h6v6H1z" /></Glyph>
      <Glyph w={11} line={2}><path d="M2 9h4l6-5v16l-6-5H2zM15 8q3 4 0 8M19 5q5 7 0 14" /></Glyph>
      <span>ENG</span>
      <TrayDate>23-Feb-23</TrayDate>
      <Glyph w={12}><path d="M1 3h20v13H9l-4 5v-5H1z" /><circle cx="18" cy="16" r="6" fill="#1b1b1d" /><circle cx="18" cy="16" r="4" /></Glyph>
      <TrayEdge />
    </Tray>
  </Taskbar>
);

const Capture = () => (
  <CaptureWindow>
    <CaptureTitle>
      <Glyph w={9}><path d="M1 22L14 1v10L6 22z" fill="#e02b20" /><path d="M13 10l10 12h-6l-6-7z" fill="#2e9e3e" /></Glyph>
      <CaptureCaption>FastStone Capture</CaptureCaption>
      <button aria-label="Minimize"><Glyph w={6} line={4}><path d="M3 16h18" /></Glyph></button>&nbsp;&nbsp;
      <button aria-label="Close"><Glyph w={6} line={4}><path d="M3 3l18 18M21 3L3 21" /></Glyph></button>
    </CaptureTitle>
    <CaptureTools>
      {captureIcons.map((icon, i) => <button key={i} aria-label="Capture mode"><Glyph w={9} line={2.600}>{icon}</Glyph></button>)}
      <button aria-label="Output"><Glyph w={13} box="0 0 30 24"><path d="M2 7h16v14H2z" fill="#f0d9a8" /><path d="M3 12l6 7L20 2" stroke="#cf4a2b" strokeWidth="3" fill="none" /><path d="M23 11h7l-3.500 4z" /></Glyph></button>
      <button aria-label="Settings"><Glyph w={9}><path d="M2 3l12 2 8 12-8 6-6-9z" fill="#d9dfe8" stroke="#6b7480" strokeWidth="1.500" /><path d="M8 6l9 12" stroke="#cf6a4b" strokeWidth="3" /></Glyph></button>
    </CaptureTools>
  </CaptureWindow>
);

export default function App() {
  return (
    <Page>
      <Global />
      <Meeting>
        <PresenterBar><Crewmate />Quyen Phan is presenting</PresenterBar>
        <Stage>
          <Screen>
            <Browser />
            <AppBody>
              <SideMenu />
              <Workspace>
                <Head />
                <SubNav />
                <Columns>
                  <Feedback>
                    <Notes>{notes.map((lines) => <div key={lines[0]}>{lines.map((line) => <p key={line}>{line}</p>)}</div>)}</Notes>
                    <Caret><Glyph w={7} h={12} box="0 0 14 24" line={1.800}><path d="M3 2h8M7 2v20M3 22h8" /></Glyph></Caret>
                  </Feedback>
                  <Timeline />
                </Columns>
              </Workspace>
              <ScrollTrack><Glyph w={5} h={3} box="0 0 10 6"><path d="M5 0l5 6H0z" /></Glyph><ScrollThumb /></ScrollTrack>
            </AppBody>
            <Desktop />
          </Screen>
        </Stage>
        <Capture />
        <SelfTile>
          <SelfInitial>J</SelfInitial>
          <SelfMuted><MdMicOff size={17} /></SelfMuted>
          <SelfName>You</SelfName>
        </SelfTile>
        <ControlBar>
          <MeetingCode>uxa-nrju-eaq</MeetingCode>
          <Controls>
            <RoundButton $tone="red" aria-label="Turn on microphone"><MdMicOff size={18} /></RoundButton>
            <RoundButton $tone="red" aria-label="Turn on camera"><MdOutlineVideocamOff size={20} /></RoundButton>
            <RoundButton aria-label="Captions"><MdOutlineClosedCaption size={24} /></RoundButton>
            <RoundButton aria-label="Raise hand"><MdOutlineBackHand size={24} /></RoundButton>
            <RoundButton aria-label="Reactions"><MdOutlineEmojiEmotions size={24} /></RoundButton>
            <RoundButton aria-label="Present now"><MdOutlinePresentToAll size={24} /></RoundButton>
            <RoundButton aria-label="More options"><MdMoreVert size={24} /></RoundButton>
            <RoundButton $tone="red" $wide aria-label="Leave call"><MdCallEnd size={26} /></RoundButton>
          </Controls>
          <SideControls>
            <SideButton aria-label="Meeting details"><MdOutlineInfo size={24} /></SideButton>
            <SideButton aria-label="People"><MdOutlinePeopleAlt size={24} /><CountBadge>10</CountBadge></SideButton>
            <SideButton aria-label="Chat"><MdOutlineChat size={24} /><NewDot /></SideButton>
            <SideButton aria-label="Activities"><MdOutlineCategory size={24} /></SideButton>
          </SideControls>
        </ControlBar>
      </Meeting>
    </Page>
  );
}
